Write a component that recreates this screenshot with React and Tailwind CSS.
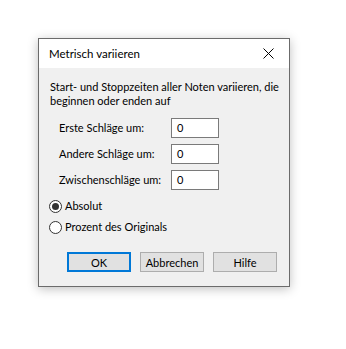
import React from "react";

const font = { fontFamily: 'Lato, "Noto Sans", sans-serif' };

const Radio = ({ checked, label }) => (
  <label className="flex items-center h-4 gap-[3px] whitespace-nowrap">
    <span className="w-[13px] h-[13px] rounded-full border border-[#333333] bg-white flex items-center justify-center">
      {checked && <span className="w-[7px] h-[7px] rounded-full bg-[#333333]" />}
    </span>
    <span>{label}</span>
  </label>
);

const Field = ({ label }) => (
  <div className="flex items-center h-5">
    <span className="w-[112px] pl-[20px] box-content whitespace-nowrap">{label}</span>
    <div className="w-[48px] h-5 border border-[#7a7a7a] bg-white pl-[5px] leading-[18px]">0</div>
  </div>
);

const Button = ({ children, primary }) => (
  <button
    className={`w-16 h-5 bg-[#e1e1e1] leading-none ${
      primary ? "border-2 border-[#0078d7]" : "border border-[#adadad]"
    }`}
  >
    {children}
  </button>
);

export default function App() {
  return (
    <div className="w-[346px] h-[349px] bg-white pt-[38px] pl-[38px] text-[11px] text-black" style={font}>
      <div className="w-[252px] h-[249px] border border-[#6b6b6b] bg-[#f0f0f0] shadow-[0_2px_10px_rgba(0,0,0,0.25)] flex flex-col">
        {/* Title bar */}
        <div className="h-[29px] bg-white flex items-center justify-between pl-[10px] pr-[10px]">
          <span className="whitespace-nowrap text-[11.5px]">Metrisch variieren</span>
          <svg width="11" height="11" viewBox="0 0 11 11" className="mr-[5px]">
            <path d="M0.5 0.5 L10.5 10.5 M10.5 0.5 L0.5 10.5" stroke="#000" strokeWidth="1" />
          </svg>
        </div>

        {/* Body */}
        <div className="pt-[12px] pl-[11px] leading-[14px] whitespace-nowrap">
          <p>Start- und Stoppzeiten aller Noten variieren, die</p>
          <p>beginnen oder enden auf</p>
        </div>

        <div className="mt-[10px] flex flex-col gap-[6px]">
          <Field label="Erste Schläge um:" />
          <Field label="Andere Schläge um:" />
          <Field label="Zwischenschläge um:" />
        </div>

        <div className="mt-[8px] pl-[10px] flex flex-col gap-[5px]">
          <Radio checked label="Absolut" />
          <Radio label="Prozent des Originals" />
        </div>

        <div className="mt-[17px] pl-[28px] flex gap-[9px]">
          <Button primary>OK</Button>
          <Button>Abbrechen</Button>
          <Button>Hilfe</Button>
        </div>
      </div>
    </div>
  );
}
